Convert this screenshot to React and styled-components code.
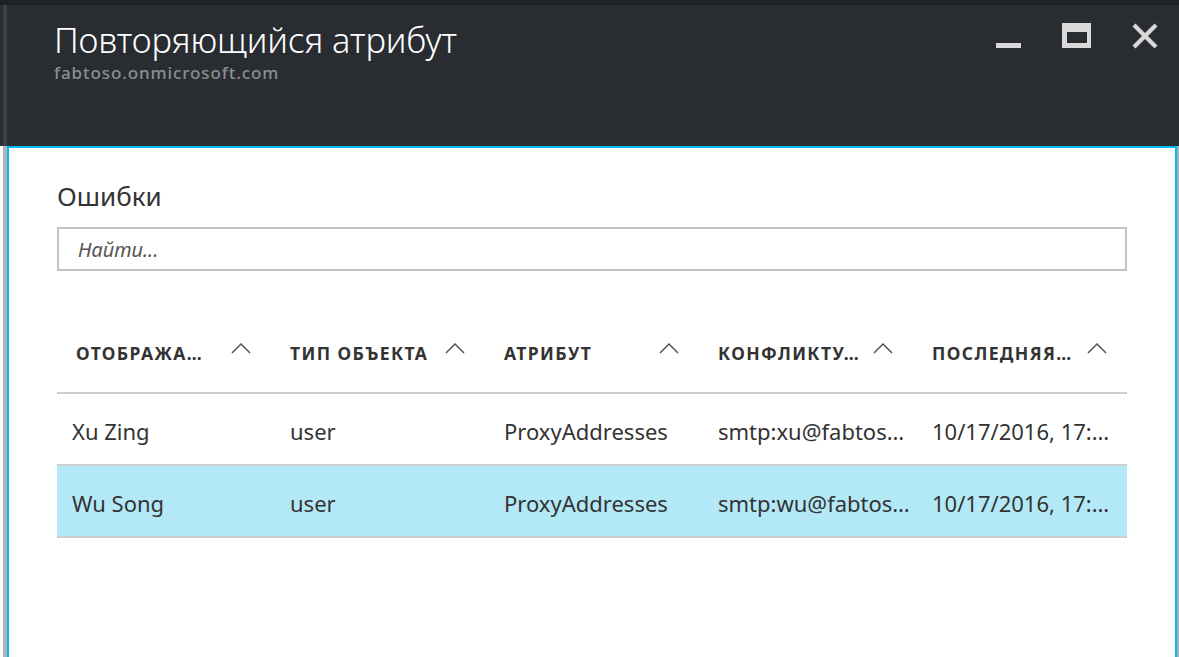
import React from "react";
import styled, { createGlobalStyle } from "styled-components";

const GlobalStyle = createGlobalStyle`
  html, body {
    margin: 0;
    padding: 0;
    background: #ffffff;
    overflow: hidden;
  }
  body {
    font-family: "Noto Sans", "Open Sans", sans-serif;
  }
`;

const columns = [
  { key: "name", label: "ОТОБРАЖА…" },
  { key: "type", label: "ТИП ОБЪЕКТА" },
  { key: "attr", label: "АТРИБУТ" },
  { key: "value", label: "КОНФЛИКТУ…" },
  { key: "time", label: "ПОСЛЕДНЯЯ…" },
];

const rows = [
  {
    name: "Xu Zing",
    type: "user",
    attr: "ProxyAddresses",
    value: "smtp:xu@fabtos…",
    time: "10/17/2016, 17:…",
  },
  {
    name: "Wu Song",
    type: "user",
    attr: "ProxyAddresses",
    value: "smtp:wu@fabtos…",
    time: "10/17/2016, 17:…",
    selected: true,
  },
];

const Caret = () => (
  <svg width="20" height="12" viewBox="0 0 20 12">
    <path d="M1 11 L10 2 L19 11" fill="none" stroke="#555" strokeWidth="1.5" />
  </svg>
);

const MinimizeIcon = () => (
  <svg width="26" height="28" viewBox="0 0 26 28">
    <rect x="0" y="20" width="25" height="5" fill="#d9d9d9" />
  </svg>
);

const MaximizeIcon = () => (
  <svg width="30" height="26" viewBox="0 0 30 26">
    <path
      d="M0 0 H29 V25 H0 Z M5 9 V20 H25 V9 Z"
      fill="#d9d9d9"
      fillRule="evenodd"
    />
  </svg>
);

const CloseIcon = () => (
  <svg width="26" height="26" viewBox="0 0 26 26">
    <path d="M2 2 L24 24 M24 2 L2 24" stroke="#d9d9d9" strokeWidth="4.2" />
  </svg>
);

const App = () => {
  return (
    <Page>
      <GlobalStyle />
      <TopStrip />
      <Header>
        <HeaderInner>
          <Titles>
            <Title>Повторяющийся атрибут</Title>
            <Subtitle>fabtoso.onmicrosoft.com</Subtitle>
          </Titles>
          <Controls>
            <ControlButton aria-label="Свернуть">
              <MinimizeIcon />
            </ControlButton>
            <ControlButton aria-label="Развернуть">
              <MaximizeIcon />
            </ControlButton>
            <ControlButton aria-label="Закрыть">
              <CloseIcon />
            </ControlButton>
          </Controls>
        </HeaderInner>
      </Header>
      <Body>
        <Panel>
          <SectionTitle>Ошибки</SectionTitle>
          <Search placeholder="Найти..." />
          <Table>
            <HeadRow>
              {columns.map((c) => (
                <HeadCell key={c.key}>
                  <span>{c.label}</span>
                  <Caret />
                </HeadCell>
              ))}
            </HeadRow>
            {rows.map((r) => (
              <Row key={r.name} $selected={r.selected}>
                {columns.map((c) => (
                  <Cell key={c.key} $first={c.key === "name"}>
                    {r[c.key]}
                  </Cell>
                ))}
              </Row>
            ))}
          </Table>
        </Panel>
      </Body>
    </Page>
  );
};

export default App;

const Page = styled.div`
  width: 1179px;
  height: 657px;
  display: flex;
  flex-direction: column;
  overflow: hidden;
`;

const TopStrip = styled.div`
  height: 5px;
  background: #1e2226;
  flex-shrink: 0;
`;

const Header = styled.header`
  height: 141px;
  flex-shrink: 0;
  background: #292d32;
  padding-left: 3px;
  padding-right: 2px;
`;

const HeaderInner = styled.div`
  height: 100%;
  display: flex;
  justify-content: space-between;
  border-left: 4px solid #3b4045;
  padding-left: 47px;
`;

const Titles = styled.div`
  display: flex;
  flex-direction: column;
  padding-top: 13px;
`;

const Title = styled.h1`
  margin: 0;
  font-family: "Noto Sans", "Open Sans", sans-serif;
  font-weight: 300;
  font-size: 34.5px;
  line-height: 44px;
  color: #ffffff;
  letter-spacing: -0.1px;
`;

const Subtitle = styled.div`
  font-size: 17px;
  line-height: 22px;
  font-weight: 500;
  color: #8b8e92;
  letter-spacing: 0.9px;
  margin-top: 0;
`;

const Controls = styled.div`
  display: flex;
  align-items: flex-start;
  gap: 40px;
  padding-top: 18px;
  padding-right: 19px;
`;

const ControlButton = styled.button`
  background: transparent;
  border: none;
  padding: 0;
  display: flex;
  cursor: pointer;
`;

const Body = styled.div`
  flex: 1;
  display: flex;
  margin-left: 3px;
  border-left: 4px solid #b3b3b3;
  border-right: 2px solid #aeb0b2;
`;

const Panel = styled.main`
  flex: 1;
  border: 2px solid #00bcf2;
  border-bottom: none;
  background: #ffffff;
  padding: 31px 48px 0 48px;
`;

const SectionTitle = styled.h2`
  margin: 0;
  font-weight: 400;
  font-size: 26px;
  line-height: 34px;
  color: #333333;
`;

const Search = styled.input`
  display: block;
  box-sizing: border-box;
  width: 100%;
  height: 44px;
  margin-top: 14px;
  border: 2px solid #c2c2c2;
  padding: 0 19px;
  font-family: "Noto Sans", "Open Sans", sans-serif;
  font-size: 20px;
  outline: none;

  &::placeholder {
    color: #555555;
    font-style: italic;
  }
`;

const Table = styled.div`
  margin-top: 43px;
`;

const HeadRow = styled.div`
  display: grid;
  grid-template-columns: repeat(5, 1fr);
  height: 78px;
  border-bottom: 2px solid #cdcdcd;
`;

const HeadCell = styled.div`
  display: flex;
  align-items: center;
  justify-content: space-between;
  padding-left: 19px;
  padding-right: 20px;
  font-size: 17.5px;
  font-weight: 700;
  letter-spacing: 1.4px;
  color: #333333;
  white-space: nowrap;

  svg {
    margin-top: -10px;
    flex-shrink: 0;
  }
`;

const Row = styled.div`
  display: grid;
  grid-template-columns: repeat(5, 1fr);
  height: 70px;
  align-items: center;
  background: ${(p) => (p.$selected ? "#b3e9f7" : "transparent")};
  border-bottom: 2px solid #cdcdcd;
`;

const Cell = styled.div`
  padding-left: ${(p) => (p.$first ? "15px" : "19px")};
  padding-top: 3px;
  font-size: 22px;
  color: #333333;
  white-space: nowrap;
  overflow: hidden;
`;
